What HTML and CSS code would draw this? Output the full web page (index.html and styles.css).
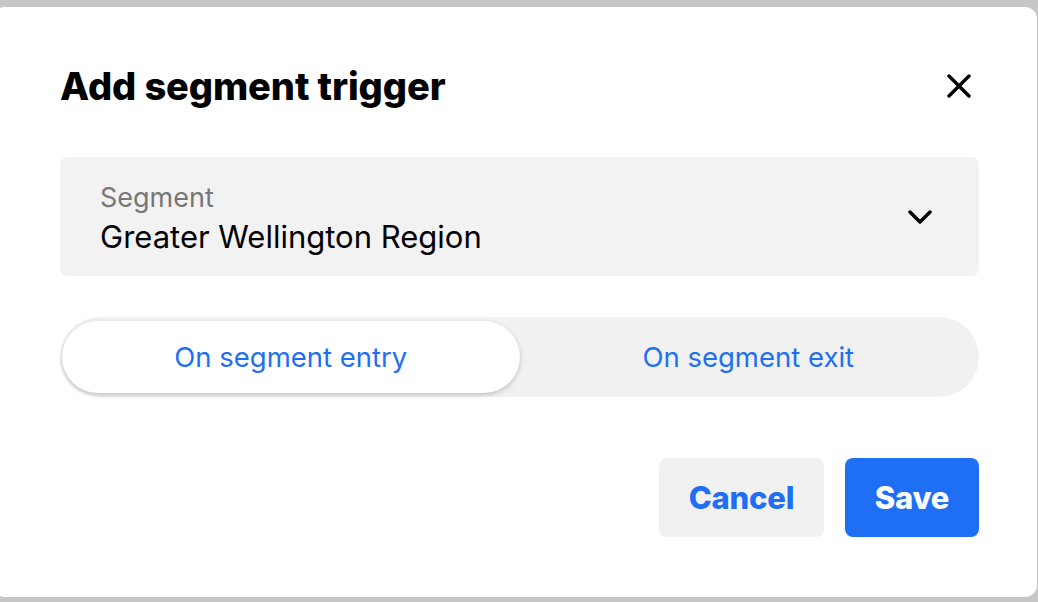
FILE: index.html
```html
<!DOCTYPE html>
<html>
<head>
<meta charset="utf-8">
<link rel="stylesheet" href="styles.css">
</head>
<body>
<div class="modal">
  <div class="header">
    <h1 class="title">Add segment trigger</h1>
    <button class="close" aria-label="Close">
      <svg width="24" height="24" viewBox="0 0 24 24"><path d="M2 2 L22 22 M22 2 L2 22" stroke="#000" stroke-width="3.4" stroke-linecap="round" fill="none"/></svg>
    </button>
  </div>
  <div class="select">
    <div class="select-text">
      <div class="select-label">Segment</div>
      <div class="select-value">Greater Wellington Region</div>
    </div>
    <svg class="chevron" width="24" height="14" viewBox="0 0 24 14"><path d="M2 2 L12 12 L22 2" stroke="#000" stroke-width="3.4" stroke-linecap="round" stroke-linejoin="round" fill="none"/></svg>
  </div>
  <div class="toggle">
    <div class="toggle-opt active">On segment entry</div>
    <div class="toggle-opt">On segment exit</div>
  </div>
  <div class="actions">
    <button class="btn btn-secondary">Cancel</button>
    <button class="btn btn-primary">Save</button>
  </div>
</div>
</body>
</html>
```
FILE: styles.css
```css
html, body {
  margin: 0;
  padding: 0;
  height: 100%;
  background: #c6c6c6;
  overflow: hidden;
}
body {
  font-family: Inter, "Noto Sans", sans-serif;
  padding-top: 7px;
}
.modal {
  box-sizing: border-box;
  margin-left: -7px;
  width: 1044px;
  height: 590px;
  background: #fff;
  border-radius: 12px;
  padding: 0 58px 0 67px;
}
.header {
  display: flex;
  align-items: center;
  justify-content: space-between;
  height: 150px;
}
.title {
  margin: 0;
  font-size: 38px;
  font-weight: 800;
  color: #000;
  letter-spacing: -0.1px;
  line-height: 46px;
  margin-top: 8px;
}
.close {
  border: 0;
  background: none;
  padding: 0;
  width: 24px;
  height: 24px;
  margin-right: 8px;
  margin-top: 8px;
  display: flex;
}
.select {
  box-sizing: border-box;
  height: 119px;
  background: #f2f2f2;
  border-radius: 8px;
  display: flex;
  align-items: center;
  justify-content: space-between;
  padding: 0 47px 0 40px;
}
.select-text {
  padding-top: 6px;
}
.select-label {
  font-size: 27px;
  color: #777;
  line-height: 32px;
}
.select-value {
  font-size: 31px;
  color: #000;
  line-height: 40px;
  margin-top: 3px;
}
.chevron {
  margin-top: 1px;
}
.toggle {
  margin-top: 41px;
  height: 80px;
  box-sizing: border-box;
  background: #f1f1f1;
  border-radius: 40px;
  padding: 4px 2px;
  display: flex;
}
.toggle-opt {
  flex: 1;
  display: flex;
  align-items: center;
  justify-content: center;
  font-size: 27.5px;
  color: #1f6ff2;
  border-radius: 36px;
}
.toggle-opt.active {
  background: #fff;
  box-shadow: 0 2px 5px rgba(0,0,0,0.2);
}
.actions {
  margin-top: 61px;
  display: flex;
  justify-content: flex-end;
  gap: 21px;
}
.btn {
  border: 0;
  height: 79px;
  border-radius: 8px;
  font-family: Inter, "Noto Sans", sans-serif;
  font-size: 31px;
  font-weight: 800;
  letter-spacing: -0.2px;
  padding: 0;
}
.btn-secondary {
  background: #f1f1f1;
  color: #1f6ff5;
  width: 165px;
}
.btn-primary {
  background: #1f6ff5;
  color: #fff;
  width: 134px;
}
```
